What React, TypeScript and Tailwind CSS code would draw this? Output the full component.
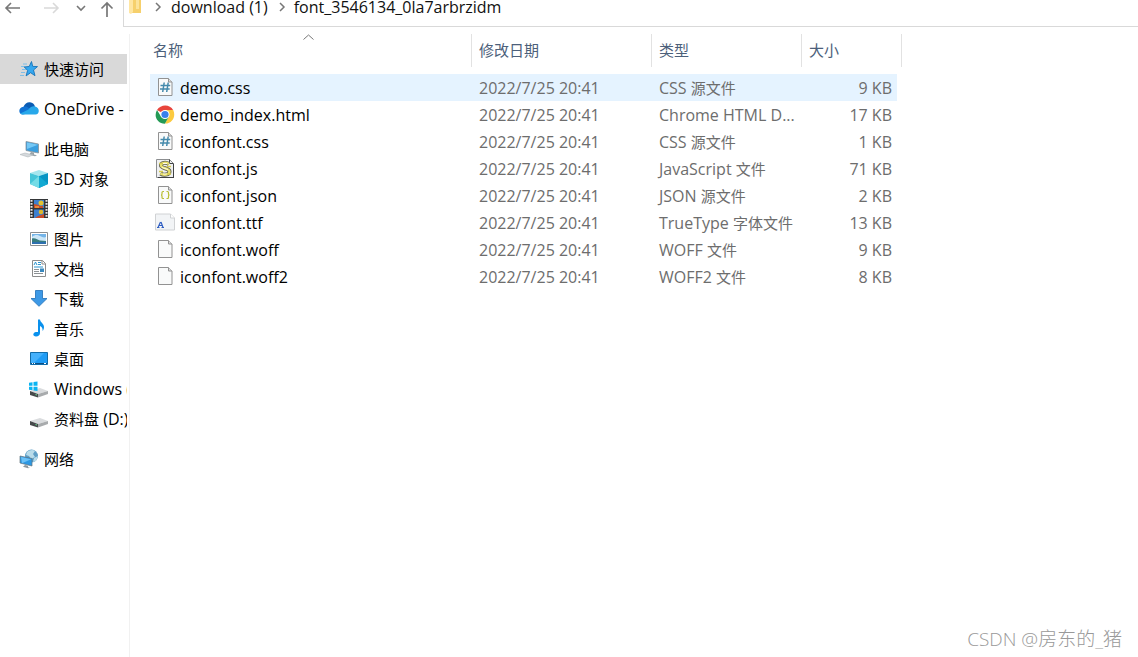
import type { ReactNode } from "react";
import clsx from "clsx";

type SideItem = {
  label: string;
  icon: ReactNode;
  nested?: boolean;
  active?: boolean;
};

type FileRow = {
  name: string;
  type: string;
  size: string;
  icon: ReactNode;
};

const MODIFIED = "2022/7/25 20:41";

function Icon({ children }: { children: ReactNode }) {
  return (
    <svg viewBox="0 0 20 20" className="h-5 w-5 flex-none" aria-hidden="true">
      {children}
    </svg>
  );
}

// Chinese runs are set one pixel smaller than the Latin around them
function Label({ text }: { text: string }) {
  return (
    <span className="whitespace-pre">
      {text.split(/([\u4e00-\u9fff]+)/).map((part, i) =>
        i % 2 ? (
          <span key={i} className="text-[15px]">
            {part}
          </span>
        ) : (
          part
        ),
      )}
    </span>
  );
}

function StarIcon() {
  return (
    <Icon>
      <path d="M4 5h4M2 7.500h4M3 10.500h4M2 13.500h4M1 16.500h4" stroke="#7fbfe8" strokeWidth="1" />
      <path
        d="M12.500 2.500l1.200 4.900 4.800.2-4 3.400 1.500 5.700-4.400-3-4.500 3.200 1.500-5.500L5.300 8l4.900-.5z"
        fill="#35a8f0"
        stroke="#1673b8"
        strokeWidth=".9"
      />
    </Icon>
  );
}

function CloudIcon() {
  return (
    <Icon>
      <path d="M4.500 8C5.500 4.500 8.500 3 11 3.300c2.600.2 4.200 1.800 5 4.200l-7 5z" fill="#0b5cb4" />
      <path d="M4 15.500c-5-.2-5-7.200.5-7.700 2-.6 3.500 0 5 1l6 4z" fill="#1173d4" />
      <path d="M9.500 10.500c1.800-2.600 4.300-3.600 6.700-3 4.800 1 4.600 8 .3 8H4c-1 0-2-.4-2.600-1z" fill="#28a8ea" />
    </Icon>
  );
}

function ComputerIcon() {
  return (
    <Icon>
      <path d="M7 2.500l12.500 2.500v9L7 11.500z" fill="#3b9fdf" stroke="#8a9399" strokeWidth=".8" />
      <path d="M8 3.600l11 2.200L8 10z" fill="#75c8f5" />
      <path d="M12 13l3 .6v1.900l3 .8-2 .9-6-1.500z" fill="#9aa3a8" />
      <path d="M1 15.500l5-1.500 8 2-5 2z" fill="#d5d9dc" stroke="#b2b8bc" strokeWidth=".6" />
    </Icon>
  );
}

function CubeIcon() {
  return (
    <Icon>
      <path d="M1 4l9-3 9 3-9 3z" fill="#a5e6ee" />
      <path d="M1 4l9 3v12l-9-4z" fill="#45c5d8" />
      <path d="M19 4l-9 3v12l9-4z" fill="#0795c4" />
      <path d="M10 7l9 8-9 4z" fill="#12a9d2" />
      <path d="M1 15l9-8v12z" fill="#74dce6" />
    </Icon>
  );
}

function VideoIcon() {
  return (
    <Icon>
      <path d="M1 0h18v19H1z" fill="#343638" />
      <path d="M2.500 1v18M17.500 1v18" stroke="#e4e4e4" strokeWidth="2" strokeDasharray="1.700 1.300" />
      <path d="M5 1h10v8H5zM5 10.500h10V19H5z" fill="#3c80d0" />
      <circle cx="12" cy="4" r="2.500" fill="#e4c330" />
      <path d="M5 5l5 1 2 3H5zM10 7h4v2h-4zM9 17l6-2v4H6z" fill="#c84c28" />
      <circle cx="12" cy="13" r="2.300" fill="#dfb82c" />
      <path d="M6 7h4v2H6z" fill="#e78a3b" />
    </Icon>
  );
}

function PictureIcon() {
  return (
    <Icon>
      <path d="M1.500 3.500h17v13h-17z" fill="#fff" stroke="#8b8e90" />
      <path d="M3 5h14v10H3z" fill="#74b4e8" />
      <path d="M3 8c3-3 6-2 8-1s4 2 6 1v4H3z" fill="#cbe6f7" />
      <path d="M3 9.500c3-1 6 1.500 8 2l6 .5v3H3z" fill="#377c7f" />
      <path d="M3 13h14v2H3z" fill="#2d6fae" />
    </Icon>
  );
}

function DocumentIcon() {
  return (
    <Icon>
      <path d="M3.500 1.500h10l3 3v13h-13z" fill="#fff" stroke="#8c8c8c" />
      <path d="M13 1.500V5h3.500" fill="none" stroke="#8c8c8c" />
      <path d="M5 6l1.500-3L8 6M9 3.500h3M9 5.500h3M5 8h9" fill="none" stroke="#2a95cf" />
      <path d="M5 10.500h5M5 12.500h5M5 14.500h9" stroke="#8d9295" />
      <path d="M11 9.500h4v3.500h-4z" fill="#3987bd" />
    </Icon>
  );
}

function DownloadIcon() {
  return (
    <Icon>
      <path d="M6.500 1.500h7v8h4.500L10 17.300 2 9.500h4.500z" fill="#3d99e6" stroke="#2e79bd" strokeWidth=".9" />
    </Icon>
  );
}

function MusicIcon() {
  return (
    <Icon>
      <path
        d="M9 .5h2c.3 3 4 4 4 7.500 0 1.600-.6 3-1.400 4 .2-3-.8-4.300-2.600-5V14c0 2-1.600 3.500-4 3.500-3.500 0-3.600-4 0-4.500H9z"
        fill="#0a91ed"
      />
    </Icon>
  );
}

function DesktopIcon() {
  return (
    <Icon>
      <path d="M1.500 3.500h17v12h-17z" fill="#209cf5" stroke="#126ca9" />
      <path d="M2 4h13L5 14H2z" fill="#45b1fc" />
      <path d="M2 14.500h16" stroke="#0c4f83" />
      <path d="M3 14.500h1M5 14.500h1M15 14.500h2" stroke="#fff" />
    </Icon>
  );
}

function DriveIcon({ windows = false }: { windows?: boolean }) {
  return (
    <Icon>
      <path d="M1 12l10-3 8 3-10 3z" fill="#dadcde" />
      <path d="M1 12l8 3v3.500l-8-2.500z" fill="#46494b" />
      <path d="M9 15l10-3v3L9 18.500z" fill="#a8abad" />
      <path d="M6.500 15.500l1.500.5" stroke="#6ada8e" />
      {windows && (
        <path d="M0 3.800l3.500-.5v3.500H0zM4.500 3.100l4-.6v4.300h-4zM0 7.800h3.500v3.500L0 10.800zM4.500 7.800h4V12l-4-.5z" fill="#0bb4f2" />
      )}
    </Icon>
  );
}

function NetworkIcon() {
  return (
    <Icon>
      <circle cx="12.500" cy="7" r="6.500" fill="#5f9fc6" />
      <path d="M8 3c2-2 6-3 8-1l-2 3 2 3-4 2-2-3-3-1zM15 9l4-2-2 5-3 1z" fill="#b9dcea" />
      <path d="M1 7l12 2.500v7.500L1 14z" fill="#2c98e3" stroke="#63737d" strokeWidth=".7" />
      <path d="M2 8l10 2.200-9 4z" fill="#6bc1f7" />
      <path d="M6 16l3 .7v1.500l2 .5-2 .6-5-1.500z" fill="#8c979d" />
    </Icon>
  );
}

function Sheet({ children }: { children?: ReactNode }) {
  return (
    <Icon>
      <path d="M3.500.5h10l3.500 3.500v13.500H3.500z" fill="#f9fafa" stroke="#929292" />
      <path d="M13.500.5V4H17" fill="#ddd" stroke="#929292" />
      {children}
    </Icon>
  );
}

function CssIcon() {
  return (
    <Sheet>
      <path d="M9.200 4.500l-1.500 9.500M13.200 4.500l-1.500 9.500M5.500 7.500H15.200M5 11h9.700" fill="none" stroke="#458aac" strokeWidth="1.500" />
    </Sheet>
  );
}

function JsonIcon() {
  return (
    <Sheet>
      <path
        d="M9 5.500H8q-1 0-1 1V8q0 1-1 1 1 0 1 1v1.500q0 1 1 1h1M11.500 5.500h1q1 0 1 1V8q0 1 1 1-1 0-1 1v1.500q0 1-1 1h-1"
        fill="none"
        stroke="#b9bd33"
        strokeWidth="1.200"
      />
    </Sheet>
  );
}

function ScriptIcon() {
  return (
    <Icon>
      <path d="M1.500.5h13l4 4v14h-17z" fill="#eff0f1" stroke="#8c8e90" />
      <path d="M18.500 5v14M3 18.500h16M14.500.5v4h4" fill="none" stroke="#404244" />
      <path d="M14 5C11 3 6 3.500 6 6.500s8.500 2.500 8.500 6-6 4-9 2" fill="none" stroke="#5b5c50" strokeWidth="4" />
      <path d="M14 5C11 3 6 3.500 6 6.500s8.500 2.500 8.500 6-6 4-9 2" fill="none" stroke="#e9e06e" strokeWidth="2.400" />
      <path d="M4 4.500h5M11 15h5M4 12.500h4M12 7.500h4" stroke="#d5cc4d" strokeWidth="1.300" />
      <path d="M7 8.500l6 2M8 4.500h4M8 15h4" stroke="#fffce0" />
    </Icon>
  );
}

function FontIcon() {
  return (
    <Icon>
      <path d="M.5 1h15L19.500 5v12H.5z" fill="#f2f4f6" stroke="#d0d2d4" />
      <path d="M15.500 1v4h4" fill="#fff" stroke="#d0d2d4" />
      <path d="M3 14.500L5.500 9M6 9l2 5.500M4 12.500h3M2 14.500h2.500M6.500 14.500H9" fill="none" stroke="#315fc2" strokeWidth="1.200" />
    </Icon>
  );
}

function ChromeIcon() {
  return (
    <Icon>
      <path d="M10 9.500L2 5C5.500-1 15-1.200 18.100 5z" fill="#e8453c" />
      <path d="M10 9.500V5h8.200c3 6-.7 13.700-8.200 13.500l3.800-7z" fill="#fcca3f" />
      <path d="M10 9.500l3.800 2.300-3.900 6.900C2.500 18.500-1.700 11.500 2 5l4.100 6.800z" fill="#249a55" />
      <circle cx="10" cy="9.500" r="4.600" fill="#fff" />
      <circle cx="10" cy="9.500" r="3.600" fill="#3980ec" />
    </Icon>
  );
}

const SIDE_GROUPS: SideItem[][] = [
  [{ label: "快速访问", icon: <StarIcon />, active: true }],
  [{ label: "OneDrive -", icon: <CloudIcon /> }],
  [
    { label: "此电脑", icon: <ComputerIcon /> },
    { label: "3D 对象", icon: <CubeIcon />, nested: true },
    { label: "视频", icon: <VideoIcon />, nested: true },
    { label: "图片", icon: <PictureIcon />, nested: true },
    { label: "文档", icon: <DocumentIcon />, nested: true },
    { label: "下载", icon: <DownloadIcon />, nested: true },
    { label: "音乐", icon: <MusicIcon />, nested: true },
    { label: "桌面", icon: <DesktopIcon />, nested: true },
    { label: "Windows (", icon: <DriveIcon windows />, nested: true },
    { label: "资料盘 (D:)", icon: <DriveIcon />, nested: true },
  ],
  [{ label: "网络", icon: <NetworkIcon /> }],
];

const FILES: FileRow[] = [
  { name: "demo.css", type: "CSS 源文件", size: "9 KB", icon: <CssIcon /> },
  { name: "demo_index.html", type: "Chrome HTML D...", size: "17 KB", icon: <ChromeIcon /> },
  { name: "iconfont.css", type: "CSS 源文件", size: "1 KB", icon: <CssIcon /> },
  { name: "iconfont.js", type: "JavaScript 文件", size: "71 KB", icon: <ScriptIcon /> },
  { name: "iconfont.json", type: "JSON 源文件", size: "2 KB", icon: <JsonIcon /> },
  { name: "iconfont.ttf", type: "TrueType 字体文件", size: "13 KB", icon: <FontIcon /> },
  { name: "iconfont.woff", type: "WOFF 文件", size: "9 KB", icon: <Sheet /> },
  { name: "iconfont.woff2", type: "WOFF2 文件", size: "8 KB", icon: <Sheet /> },
];

function Crumb() {
  return (
    <svg viewBox="0 0 8 10" className="h-[10px] w-2 flex-none" fill="none" stroke="#777" strokeWidth="1.500">
      <path d="M2 1l4 4-4 4" />
    </svg>
  );
}

function Toolbar() {
  return (
    <header className="flex h-[27px]">
      <nav className="flex w-[123px] flex-none items-start" aria-label="导航">
        <button type="button" aria-label="后退" className="h-4 w-[26px]">
          <svg viewBox="0 0 26 16" fill="none" stroke="#777" strokeWidth="1.600">
            <path d="M20 8H6M11 3L6 8l5 5" />
          </svg>
        </button>
        <button type="button" aria-label="前进" disabled className="ml-3 h-4 w-[26px]">
          <svg viewBox="0 0 26 16" fill="none" stroke="#d9d9d9" strokeWidth="1.600">
            <path d="M6 8h14M15 3l5 5-5 5" />
          </svg>
        </button>
        <button type="button" aria-label="最近位置" className="ml-2 h-4 w-5">
          <svg viewBox="0 0 20 16" fill="none" stroke="#777" strokeWidth="1.600">
            <path d="M5 6l4 4 4-4" />
          </svg>
        </button>
        <button type="button" aria-label="上移" className="ml-[5px] h-[18px] w-5">
          <svg viewBox="0 0 20 18" fill="none" stroke="#777" strokeWidth="1.700">
            <path d="M10 17V3M4.500 8.500L10 3l5.500 5.500" />
          </svg>
        </button>
      </nav>
      <div className="flex flex-1 items-start border-b border-l border-[#d9d9d9] text-[#111]">
        <div className="flex h-[14px] items-center leading-[14px]">
          <svg viewBox="0 0 14 14" className="ml-1 h-[14px] w-[14px] flex-none">
            <path d="M3 0h10v13H3z" fill="#f6d06c" />
            <path d="M8 0h3v9H8z" fill="#fce39a" />
            <path d="M1 0h4v12l-2 2-2-1z" fill="#ffe6a2" />
          </svg>
          <span className="ml-3"><Crumb /></span>
          <a href="#download" className="ml-[9px]">download (1)</a>
          <span className="ml-[10px]"><Crumb /></span>
          <a href="#font" className="ml-2">font_3546134_0la7arbrzidm</a>
        </div>
      </div>
    </header>
  );
}

function Sidebar() {
  return (
    <aside className="w-[130px] flex-none border-r border-[#f1f1f1] pt-5 pr-[2px]">
      <nav className="flex flex-col gap-[10px]" aria-label="文件夹">
        {SIDE_GROUPS.map((group, i) => (
          <ul key={i}>
            {group.map((item) => (
              <li key={item.label}>
                <a
                  href="#folder"
                  className={clsx(
                    "flex h-[30px] items-center gap-[5px] overflow-hidden whitespace-nowrap text-black",
                    item.nested ? "pl-[29px]" : "pl-[19px]",
                    item.active && "bg-[#d9d9d9]",
                  )}
                >
                  {item.icon}
                  <Label text={item.label} />
                </a>
              </li>
            ))}
          </ul>
        ))}
      </nav>
    </aside>
  );
}

function FileTable() {
  return (
    <table className="w-[752px] table-fixed border-separate border-spacing-0 text-left">
      <colgroup>
        <col />
        <col className="w-[180px]" />
        <col className="w-[150px]" />
        <col className="w-[100px]" />
      </colgroup>
      <thead className="text-[15px] text-[#4c607a]">
        <tr className="h-[33px]">
          <th className="relative border-r border-[#e2e2e2] pb-[2px] pl-[3px] font-normal">
            名称
            <svg
              viewBox="0 0 12 6"
              className="absolute inset-x-0 top-0 mx-auto h-[6px] w-full pr-1"
              fill="none"
              stroke="#777"
            >
              <path d="M1 5.500L6 1l5 4.500" />
            </svg>
          </th>
          <th className="border-r border-[#e2e2e2] pb-[2px] pl-[7px] font-normal">修改日期</th>
          <th className="border-r border-[#e2e2e2] pb-[2px] pl-[7px] font-normal">类型</th>
          <th className="border-r border-[#e2e2e2] pb-[2px] pl-[7px] font-normal">大小</th>
        </tr>
      </thead>
      <tbody className="text-[#6d6d6d] before:block before:h-[7px]">
        {FILES.map((file, i) => {
          const cell = clsx("flex h-[27px] items-center", i === 0 && "bg-[#e5f3ff]");
          return (
            <tr key={file.name}>
              <td className="p-0">
                <div className={clsx(cell, "gap-[5px] pl-[5px] text-black")}>
                  {file.icon}
                  {file.name}
                </div>
              </td>
              <td className="p-0">
                <div className={clsx(cell, "pl-[7px]")}>{MODIFIED}</div>
              </td>
              <td className="p-0">
                <div className={clsx(cell, "pl-[7px]")}>
                  <Label text={file.type} />
                </div>
              </td>
              <td className="p-0 pr-[5px]">
                <div className={clsx(cell, "justify-end pr-[5px]")}>{file.size}</div>
              </td>
            </tr>
          );
        })}
      </tbody>
    </table>
  );
}

export default function App() {
  return (
    <div className="relative flex min-h-screen flex-col overflow-hidden bg-white font-['Open_Sans','Noto_Sans_CJK_SC',sans-serif] text-base leading-5">
      <Toolbar />
      <div className="flex flex-1 pt-[7px]">
        <Sidebar />
        <main className="min-w-0 flex-1 pl-5">
          <FileTable />
        </main>
      </div>
      <p className="absolute right-4 bottom-2 text-[19px] font-light text-[#999]">CSDN @房东的_猪</p>
    </div>
  );
}
